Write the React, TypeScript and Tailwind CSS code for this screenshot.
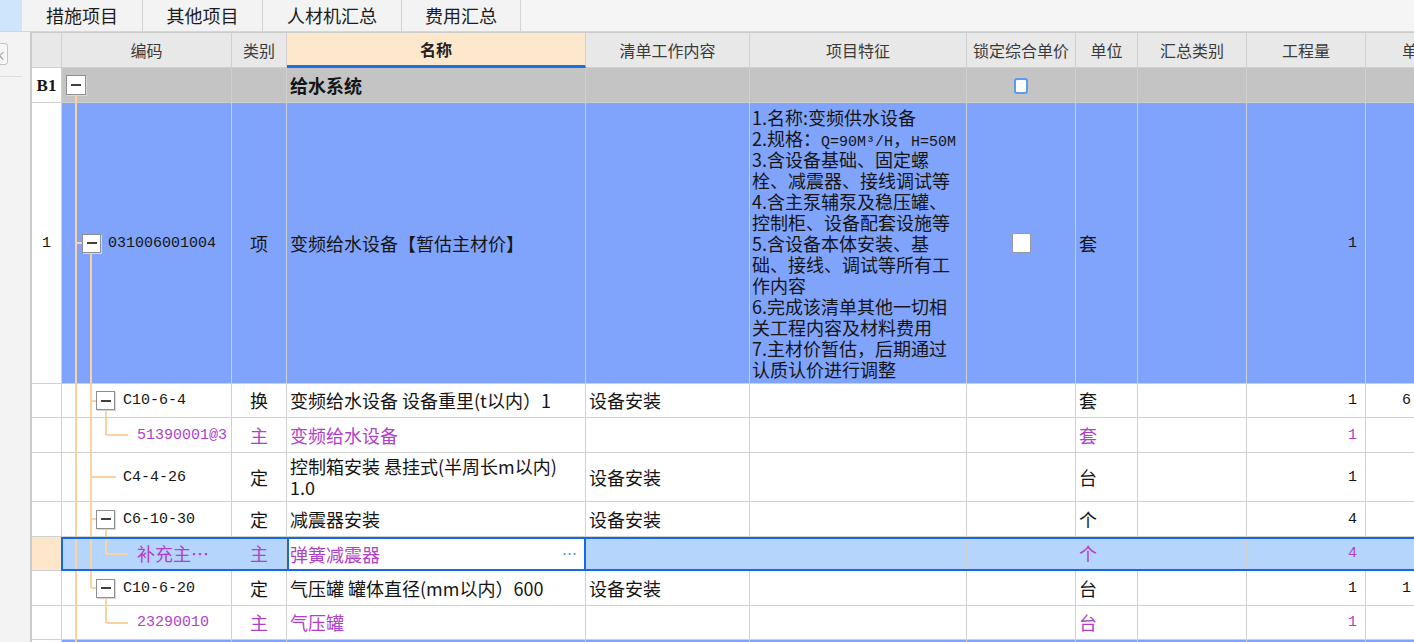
import React from "react";

const GRID = "grid grid-cols-[30px_170px_55px_299px_164px_217px_109px_62px_109px_119px_80px]";
const CELL = "flex min-w-0 items-center overflow-hidden whitespace-nowrap border-b border-r border-[#d0d0d0]";
const MONO = "[font-family:'Liberation_Mono','Noto_Sans_CJK_SC',monospace] text-[15px]";
const PURPLE = "text-[#b13fc9]";

// tree guide lines (x 76 / 91 / 106 on the page)
const LA = "absolute left-[13px] -top-px -bottom-px w-[2px] bg-[#fbd2a2]";
const LB = "absolute left-[28px] -top-px -bottom-px w-[2px] bg-[#fbd2a2]";
const LB_TOP = "absolute left-[28px] -top-px h-[calc(50%+1px)] w-[2px] bg-[#fbd2a2]";
const LB_BOX = "absolute left-[28px] top-[calc(50%+9px)] -bottom-px w-[2px] bg-[#fbd2a2]";
const LC_TOP = "absolute left-[43px] -top-px h-[calc(50%+1px)] w-[2px] bg-[#fbd2a2]";
const LC_BOX = "absolute left-[43px] top-[calc(50%+9px)] -bottom-px w-[2px] bg-[#fbd2a2]";
const LA_BOX = "absolute left-[13px] top-[calc(50%+10px)] -bottom-px w-[2px] bg-[#fbd2a2]";

const Minus = ({ big }: { big?: boolean }) => (
  <span
    className={`z-10 flex shrink-0 items-center justify-center border border-[#8f8f8f] bg-white shadow-[1px_1px_0_#d8d8d8] ${
      big ? "h-[20px] w-[20px]" : "h-[19px] w-[19px]"
    }`}
  >
    <span className="h-[2px] w-[10px] bg-[#404040]" />
  </span>
);

const Check = ({ blue }: { blue?: boolean }) =>
  blue ? (
    <span className="mt-[1px] h-[16px] w-[14px] rounded-[3px] border-2 border-[#5b9bf0] bg-white" />
  ) : (
    <span className="h-[20px] w-[19px] rounded-[2px] border border-[#9a9a9a] bg-white" />
  );

type RowProps = {
  h: string;
  bg: string;
  headBg?: string;
  head?: React.ReactNode;
  tree: React.ReactNode;
  kind?: string;
  name?: React.ReactNode;
  nameCell?: string;
  content?: string;
  feature?: React.ReactNode;
  lock?: React.ReactNode;
  unit?: string;
  qty?: string;
  tail?: string;
  color?: string;
  overlay?: React.ReactNode;
};

const Row = ({
  h,
  bg,
  headBg = "bg-white",
  head,
  tree,
  kind,
  name,
  nameCell,
  content,
  feature,
  lock,
  unit,
  qty,
  tail,
  color = "text-[#151515]",
  overlay
}: RowProps) => (
  <div className={`${GRID} relative ${h} ${color} text-[18px] leading-[21px]`}>
    <div className={`${CELL} justify-center ${headBg}`}>{head}</div>
    <div className={`${CELL} relative ${bg}`}>{tree}</div>
    <div className={`${CELL} justify-center ${bg}`}>{kind}</div>
    <div className={nameCell ?? `${CELL} pl-[3px] ${bg}`}>{name}</div>
    <div className={`${CELL} pl-[3px] ${bg}`}>{content}</div>
    <div className={`${CELL} ${bg}`}>{feature}</div>
    <div className={`${CELL} justify-center ${bg}`}>{lock}</div>
    <div className={`${CELL} pl-[3px] ${bg}`}>{unit}</div>
    <div className={`${CELL} ${bg}`} />
    <div className={`${CELL} justify-end pr-[8px] ${MONO} ${bg}`}>{qty}</div>
    <div className={`${CELL} pl-[36px] ${MONO} ${bg}`}>{tail}</div>
    {overlay}
  </div>
);

const FEATURE: React.ReactNode[] = [
  "1.名称:变频供水设备",
  <>
    2.规格：<span className={MONO}>Q=90M³/H</span>，<span className={MONO}>H=50M</span>
  </>,
  "3.含设备基础、固定螺",
  "栓、减震器、接线调试等",
  "4.含主泵辅泵及稳压罐、",
  "控制柜、设备配套设施等",
  "5.含设备本体安装、基",
  "础、接线、调试等所有工",
  "作内容",
  "6.完成该清单其他一切相",
  "关工程内容及材料费用",
  "7.主材价暂估，后期通过",
  "认质认价进行调整"
];

const HEADERS = ["清单工作内容", "项目特征", "锁定综合单价", "单位", "汇总类别", "工程量"];

const TABS = [
  { label: "措施项目", w: "w-[121px]" },
  { label: "其他项目", w: "w-[120px]" },
  { label: "人材机汇总", w: "w-[139px]" },
  { label: "费用汇总", w: "w-[119px]" }
];

export default function App() {
  const grayRow = "bg-[#c4c4c4]";
  const blueRow = "bg-[#80a4fc]";
  const selRow = "bg-[#b5d5fd]";

  return (
    <div className="flex h-[642px] w-[1414px] flex-col overflow-hidden bg-[#f4f4f4] [font-family:'Noto_Sans_CJK_SC',sans-serif]">
      {/* tab strip */}
      <div className="flex h-[32px] shrink-0 border-b border-[#d6d6d6] bg-[#f5f5f5]">
        <div className="w-[22px] bg-[#cfe5fb]" />
        {TABS.map((t) => (
          <div
            key={t.label}
            className={`${t.w} flex items-center justify-center border-r border-[#d3d3d3] bg-[#f3f3f3] text-[18px] text-[#1c1c1c]`}
          >
            {t.label}
          </div>
        ))}
      </div>

      <div className="flex min-h-0 flex-1">
        {/* collapsed side panel */}
        <div className="flex w-[30px] shrink-0 flex-col bg-[#f3f3f3]">
          <div className="ml-[-14px] mt-[11px] flex h-[22px] w-[22px] items-center justify-end rounded-[3px] border border-[#c4c4c4] bg-[#f7f7f7] pr-[1px] text-[13px] leading-none text-[#8a8a8a]">
            ×
          </div>
          <div className="mt-[11px] h-px w-[22px] bg-[#dcdcdc]" />
        </div>

        {/* grid */}
        <div className="min-w-0 flex-1 overflow-hidden border-l-2 border-t border-[#cbcbcb] bg-white">
          <div className={`${GRID} h-[35px] text-[16px] text-[#3a3a3a]`}>
            <div className={`${CELL} bg-[#e8e8e8]`} />
            <div className={`${CELL} justify-center bg-[#e8e8e8]`}>编码</div>
            <div className={`${CELL} justify-center bg-[#e8e8e8]`}>类别</div>
            <div className="flex items-center justify-center border-r border-[#d0d0d0] border-b-[3px] border-b-[#1d6de5] bg-[#fde8cd] font-bold text-[#222]">
              名称
            </div>
            {HEADERS.map((h) => (
              <div key={h} className={`${CELL} justify-center bg-[#e8e8e8]`}>
                {h}
              </div>
            ))}
            <div className={`${CELL} bg-[#e8e8e8] pl-[36px]`}>单价</div>
          </div>

          {/* B1 */}
          <Row
            h="h-[35px]"
            bg={grayRow}
            head={<span className="[font-family:'Liberation_Serif',serif] text-[17px] font-bold">B1</span>}
            tree={
              <>
                <span className={LA_BOX} />
                <span className="pl-[4px]">
                  <Minus big />
                </span>
              </>
            }
            name={<span className="font-bold">给水系统</span>}
            lock={<Check blue />}
          />

          {/* 1 */}
          <Row
            h="h-[281px]"
            bg={blueRow}
            head={<span className={MONO}>1</span>}
            tree={
              <>
                <span className={LA} />
                <span className="absolute left-[14px] top-[calc(50%-1px)] h-[2px] w-[6px] bg-[#fbd2a2]" />
                <span className={LB_BOX} />
                <span className="flex items-center gap-[7px] pl-[20px]">
                  <Minus />
                  <span className={MONO}>031006001004</span>
                </span>
              </>
            }
            kind="项"
            name="变频给水设备【暂估主材价】"
            feature={
              <div className="flex w-full flex-col pl-[2px] leading-[21px]">
                {FEATURE.map((l, i) => (
                  <div key={i} className="h-[21px] overflow-hidden whitespace-nowrap">
                    {l}
                  </div>
                ))}
              </div>
            }
            lock={<Check />}
            unit="套"
            qty="1"
          />

          {/* C10-6-4 */}
          <Row
            h="h-[34px]"
            bg="bg-white"
            tree={
              <>
                <span className={LA} />
                <span className={LB} />
                <span className="absolute left-[29px] top-[calc(50%-1px)] h-[2px] w-[5px] bg-[#fbd2a2]" />
                <span className={LC_BOX} />
                <span className="flex items-center gap-[8px] pl-[34px]">
                  <Minus />
                  <span className={MONO}>C10-6-4</span>
                </span>
              </>
            }
            kind="换"
            name="变频给水设备 设备重里(t以内）1"
            content="设备安装"
            unit="套"
            qty="1"
            tail="6"
          />

          {/* 51390001@3 */}
          <Row
            h="h-[35px]"
            bg="bg-white"
            color={PURPLE}
            tree={
              <>
                <span className={LA} />
                <span className={LB} />
                <span className={LC_TOP} />
                <span className="absolute left-[44px] top-[calc(50%-1px)] h-[2px] w-[22px] bg-[#fbd2a2]" />
                <span className={`${MONO} pl-[75px]`}>51390001@3</span>
              </>
            }
            kind="主"
            name="变频给水设备"
            unit="套"
            qty="1"
          />

          {/* C4-4-26 */}
          <Row
            h="h-[49px]"
            bg="bg-white"
            tree={
              <>
                <span className={LA} />
                <span className={LB} />
                <span className="absolute left-[29px] top-[calc(50%-1px)] h-[2px] w-[25px] bg-[#fbd2a2]" />
                <span className={`${MONO} pl-[61px]`}>C4-4-26</span>
              </>
            }
            kind="定"
            name={
              <span className="flex flex-col leading-[21px]">
                <span>控制箱安装 悬挂式(半周长m以内)</span>
                <span>1.0</span>
              </span>
            }
            content="设备安装"
            unit="台"
            qty="1"
          />

          {/* C6-10-30 */}
          <Row
            h="h-[35px]"
            bg="bg-white"
            tree={
              <>
                <span className={LA} />
                <span className={LB} />
                <span className="absolute left-[29px] top-[calc(50%-1px)] h-[2px] w-[5px] bg-[#fbd2a2]" />
                <span className={LC_BOX} />
                <span className="flex items-center gap-[8px] pl-[34px]">
                  <Minus />
                  <span className={MONO}>C6-10-30</span>
                </span>
              </>
            }
            kind="定"
            name="减震器安装"
            content="设备安装"
            unit="个"
            qty="4"
          />

          {/* selected: 补充主材 */}
          <Row
            h="h-[34px]"
            bg={selRow}
            headBg="bg-[#fde6c9]"
            color={PURPLE}
            tree={
              <>
                <span className={LA} />
                <span className={LB} />
                <span className={LC_TOP} />
                <span className="absolute left-[44px] top-[calc(50%-1px)] h-[2px] w-[22px] bg-[#fbd2a2]" />
                <span className="pl-[75px]">补充主…</span>
              </>
            }
            kind="主"
            nameCell="relative flex min-w-0 items-center overflow-hidden whitespace-nowrap border-2 border-[#1668e3] bg-white pl-[1px]"
            name={
              <>
                <span>弹簧减震器</span>
                <span className="absolute right-[7px] top-[4px] text-[15px] text-[#5f94dc]">…</span>
              </>
            }
            unit="个"
            qty="4"
            overlay={
              <div className="pointer-events-none absolute bottom-0 left-[29px] right-[-4px] top-0 border-2 border-[#1668e3]" />
            }
          />

          {/* C10-6-20 */}
          <Row
            h="h-[35px]"
            bg="bg-white"
            tree={
              <>
                <span className={LA} />
                <span className={LB_TOP} />
                <span className="absolute left-[29px] top-[calc(50%-1px)] h-[2px] w-[5px] bg-[#fbd2a2]" />
                <span className={LC_BOX} />
                <span className="flex items-center gap-[8px] pl-[34px]">
                  <Minus />
                  <span className={MONO}>C10-6-20</span>
                </span>
              </>
            }
            kind="定"
            name="气压罐 罐体直径(mm以内）600"
            content="设备安装"
            unit="台"
            qty="1"
            tail="1"
          />

          {/* 23290010 */}
          <Row
            h="h-[34px]"
            bg="bg-white"
            color={PURPLE}
            tree={
              <>
                <span className={LA} />
                <span className={LC_TOP} />
                <span className="absolute left-[44px] top-[calc(50%-1px)] h-[2px] w-[22px] bg-[#fbd2a2]" />
                <span className={`${MONO} pl-[75px]`}>23290010</span>
              </>
            }
            kind="主"
            name="气压罐"
            unit="台"
            qty="1"
          />

          <Row h="h-[35px]" bg={blueRow} tree={<span className={LA} />} />
        </div>
      </div>
    </div>
  );
}
